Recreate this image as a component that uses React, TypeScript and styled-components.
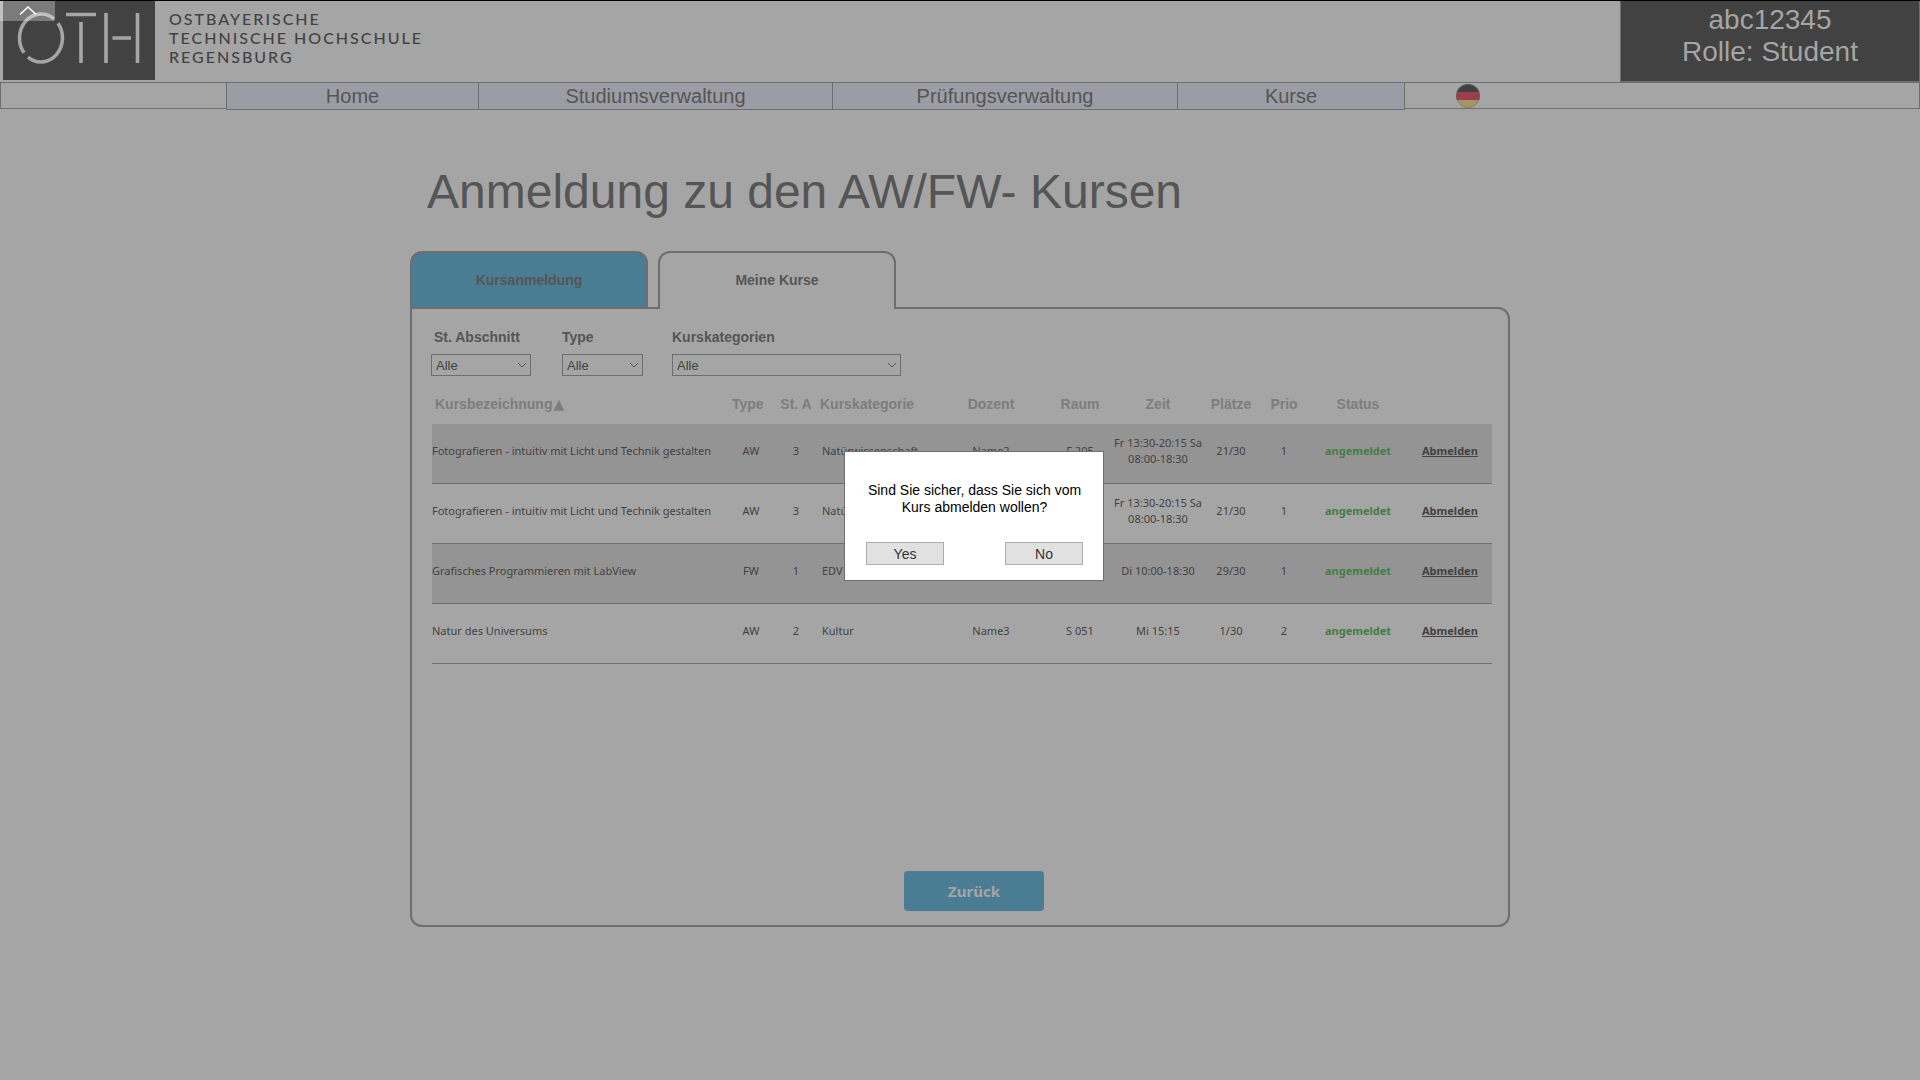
import React, { useState } from 'react';
import styled, { createGlobalStyle, css } from 'styled-components';

const line = '#6e6e6e';
const page = '#a5a5a5';
const ink = '#555555';
const petrol = '#4a7d93';
const sans = `"Liberation Sans", Arial, sans-serif`;
const humanist = `"Noto Sans", "Open Sans", sans-serif`;

const GlobalStyle = createGlobalStyle`
  *, *::before, *::after { box-sizing: border-box; }
  body { margin: 0; background: ${page}; color: ${ink}; font-family: ${sans}; }
  button, select { font-family: inherit; }
`;

const Header = styled.header`
  display: flex;
  justify-content: space-between;
  height: 82px;
  border-top: 1px solid #000;
`;

const Brand = styled.a`
  display: flex;
  align-items: flex-start;
  gap: 14px;
  padding-left: 3px;
  color: #424242;
  text-decoration: none;
`;

const BrandName = styled.span`
  padding-top: 8px;
  font: 500 16px/19px Lato, sans-serif;
  letter-spacing: 2px;
`;

const CollapseButton = styled.button`
  position: absolute;
  top: 1px;
  left: 0;
  width: 55px;
  height: 20px;
  padding: 0;
  border: 0;
  background: rgba(255, 255, 255, 0.3);
`;

const UserBox = styled.div`
  width: 300px;
  padding-top: 3px;
  border: solid ${line};
  border-width: 0 1px 1px;
  background: #424242;
  color: ${page};
  font-size: 28px;
  line-height: 32px;
  text-align: center;
`;

const Nav = styled.nav`
  display: grid;
  grid-template-columns: 226px 252px 354px 345px 228px 1fr;
  height: 28px;
`;

const NavBlank = styled.div`
  display: flex;
  align-items: center;
  height: 27px;
  padding-left: 51px;
  border: 1px solid ${line};
  border-width: 1px 0 1px 1px;
  &:last-child { border-width: 1px 1px 1px 0; }
`;

const NavLink = styled.a`
  border: 1px solid ${line};
  border-right-width: 0;
  background: #9c9ca5;
  color: ${ink};
  font-size: 20px;
  line-height: 26px;
  text-align: center;
  text-decoration: none;
  &:nth-last-child(2) { border-right-width: 1px; }
`;

const LanguageButton = styled.button`
  display: block;
  width: 24px;
  height: 24px;
  padding: 0;
  border: 0;
  background: none;
`;

const Main = styled.main`
  width: 100%;
  max-width: 1100px;
  margin: 0 auto;
  padding: 53px 0 40px;
`;

const Title = styled.h1`
  margin: 0 0 30px;
  padding-left: 17px;
  font-size: 48px;
  font-weight: 400;
  line-height: 58px;
`;

const Tabs = styled.div`
  display: flex;
  gap: 10px;
  margin-bottom: -2px;
`;

const Tab = styled.button<{ $active?: boolean }>`
  position: relative;
  width: 238px;
  height: 58px;
  padding: 0;
  border: 2px solid ${line};
  border-radius: 12px 12px 0 0;
  background: ${petrol};
  color: ${ink};
  font-size: 14px;
  font-weight: 700;
  ${p => p.$active && css`
    padding-bottom: 2px;
    border-bottom: 0;
    background: ${page};
  `}
`;

const Panel = styled.section`
  display: flex;
  flex-direction: column;
  min-height: 620px;
  padding: 19px 16px 14px 20px;
  border: 2px solid ${line};
  border-radius: 0 12px 12px 12px;
`;

const Filters = styled.div`
  display: flex;
`;

const Filter = styled.div<{ $width: number; $gap: number }>`
  display: flex;
  flex-direction: column;
  gap: 8px;
  width: ${p => p.$width}px;
  margin-right: ${p => p.$gap}px;
  margin-left: -1px;
`;

const FilterLabel = styled.label<{ $indent?: boolean }>`
  padding-left: ${p => (p.$indent ? 3 : 0)}px;
  font-size: 14px;
  font-weight: 700;
  line-height: 18px;
  white-space: nowrap;
`;

const SelectFrame = styled.span`
  display: grid;
  align-items: center;
  > * { grid-area: 1 / 1; }
  svg { justify-self: end; margin-right: 4px; pointer-events: none; }
`;

const Select = styled.select`
  appearance: none;
  width: 100%;
  height: 22px;
  padding: 0 4px;
  border: 1px solid ${line};
  border-radius: 0;
  background: transparent;
  color: #424242;
  font-size: 13px;
`;

const Table = styled.table`
  width: 100%;
  margin-top: 12px;
  border-collapse: separate;
  border-spacing: 0;
  table-layout: fixed;
`;

const Th = styled.th<{ $left?: number }>`
  height: 36px;
  padding: 0 0 4px;
  color: #7d7d7d;
  font-size: 14px;
  line-height: 16px;
  white-space: nowrap;
  ${p => p.$left !== undefined && css`
    padding-left: ${p.$left}px;
    text-align: left;
  `}
`;

const SortMark = styled.span`
  margin-left: 1px;
  font-family: "DejaVu Sans", sans-serif;
`;

const Row = styled.tr`
  &:nth-child(odd) { background: #949494; }
`;

const Td = styled.td<{ $left?: number }>`
  height: 60px;
  padding: 0 0 6px;
  border-bottom: 1px solid ${line};
  color: #424242;
  font: 11px/16px ${humanist};
  text-align: center;
  white-space: pre-line;
  ${p => p.$left !== undefined && css`
    padding-left: ${p.$left}px;
    text-align: left;
  `}
`;

const Status = styled.strong`
  color: #437d43;
`;

const SignOff = styled.a`
  color: #424242;
  font-weight: 700;
`;

const Footer = styled.div`
  display: flex;
  justify-content: center;
  margin-top: auto;
  padding-left: 24px;
`;

const Back = styled.button`
  width: 140px;
  height: 40px;
  padding: 0;
  border: 0;
  border-radius: 4px;
  background: ${petrol};
  color: ${page};
  font: 700 15px/20px ${humanist};
`;

const Overlay = styled.div`
  position: fixed;
  inset: 0;
  display: flex;
  align-items: flex-start;
  justify-content: center;
  padding: 451px 0 0 28px;
`;

const Dialog = styled.div`
  width: 260px;
  padding: 30px 20px 15px 21px;
  border: 1px solid ${line};
  background: #fff;
  color: #000;
  font-size: 14px;
  line-height: 17px;
  text-align: center;
`;

const Question = styled.p`
  margin: 0 0 26px;
`;

const Choices = styled.div`
  display: flex;
  justify-content: space-between;
`;

const Choice = styled.button`
  width: 78px;
  height: 23px;
  padding: 0;
  border: 1px solid #adadad;
  background: #e1e1e1;
  color: #333;
  font-size: 14px;
`;

const Logo = () => (
  <svg width="152" height="79" viewBox="0 0 152 79" role="img" aria-label="OTH">
    <rect width="152" height="79" fill="#424242" />
    <g fill="none" stroke={page} strokeWidth="3.6">
      <path d="M51 17.900A21.500 24 0 0 0 21 51.700" />
      <path d="M55 22.300A21.500 24 0 0 1 25 56.100" />
      <path d="M63 13.500h30M78 21v41M103 12v50M134.500 12v50M109.500 37h18.500" />
    </g>
  </svg>
);

const Arrow = () => (
  <svg width="10" height="6" viewBox="0 0 10 6" fill="none" stroke={ink}>
    <path d="M1 1l4 4 4-4" />
  </svg>
);

const Flag = () => (
  <svg width="24" height="24" viewBox="0 0 24 24">
    <clipPath id="disc"><circle cx="12" cy="12" r="12" /></clipPath>
    <g clipPath="url(#disc)">
      <path fill="#404040" d="M0 0h24v8H0z" />
      <path fill="#9a3d50" d="M0 8h24v8H0z" />
      <path fill="#a39660" d="M0 16h24v8H0z" />
    </g>
    <circle cx="12" cy="12" r="11.500" fill="none" stroke={line} strokeOpacity="0.5" />
  </svg>
);

const filters = [
  { id: 'abschnitt', label: 'St. Abschnitt', width: 100, gap: 32, indent: true },
  { id: 'type', label: 'Type', width: 81, gap: 30 },
  { id: 'kategorie', label: 'Kurskategorien', width: 229, gap: 0 },
];

const widths = [298, 42, 48, 110, 122, 56, 100, 46, 60, 88, 90];

const courses = [
  ['Fotografieren - intuitiv mit Licht und Technik gestalten', 'AW', '3', 'Natürwissenschaft', 'Name2', 'F 205', 'Fr 13:30-20:15 Sa\n08:00-18:30', '21/30', '1'],
  ['Fotografieren - intuitiv mit Licht und Technik gestalten', 'AW', '3', 'Natürwissenschaft', '', '', 'Fr 13:30-20:15 Sa\n08:00-18:30', '21/30', '1'],
  ['Grafisches Programmieren mit LabView', 'FW', '1', 'EDV', '', '', 'Di 10:00-18:30', '29/30', '1'],
  ['Natur des Universums', 'AW', '2', 'Kultur', 'Name3', 'S 051', 'Mi 15:15', '1/30', '2'],
];

const cellLeft: Record<number, number> = { 0: 0, 3: 2 };

export default function App() {
  const [open, setOpen] = useState(true);
  return (
    <>
      <GlobalStyle />
      <Header>
        <Brand href="#">
          <Logo />
          <BrandName>
            OSTBAYERISCHE<br />TECHNISCHE HOCHSCHULE<br />REGENSBURG
          </BrandName>
        </Brand>
        <CollapseButton aria-label="Einklappen">
          <svg width="55" height="20" viewBox="0 0 55 20" fill="none" stroke="#fff" strokeWidth="1.600">
            <path d="M20 13.500l8-7.500 8 7.500" />
          </svg>
        </CollapseButton>
        <UserBox>abc12345<br />Rolle: Student</UserBox>
      </Header>
      <Nav>
        <NavBlank />
        <NavLink href="#home">Home</NavLink>
        <NavLink href="#studium">Studiumsverwaltung</NavLink>
        <NavLink href="#pruefung">Prüfungsverwaltung</NavLink>
        <NavLink href="#kurse">Kurse</NavLink>
        <NavBlank>
          <LanguageButton aria-label="Deutsch"><Flag /></LanguageButton>
        </NavBlank>
      </Nav>
      <Main>
        <Title>Anmeldung zu den AW/FW- Kursen</Title>
        <Tabs>
          <Tab>Kursanmeldung</Tab>
          <Tab $active>Meine Kurse</Tab>
        </Tabs>
        <Panel>
          <Filters>
            {filters.map(f => (
              <Filter key={f.id} $width={f.width} $gap={f.gap}>
                <FilterLabel htmlFor={f.id} $indent={f.indent}>{f.label}</FilterLabel>
                <SelectFrame>
                  <Select id={f.id}><option>Alle</option></Select>
                  <Arrow />
                </SelectFrame>
              </Filter>
            ))}
          </Filters>
          <Table>
            <colgroup>
              {widths.map((w, i) => <col key={i} width={w} />)}
            </colgroup>
            <thead>
              <tr>
                <Th $left={3}>Kursbezeichnung<SortMark>▲</SortMark></Th>
                <Th $left={2}>Type</Th>
                <Th>St. A</Th>
                <Th $left={0}>Kurskategorie</Th>
                <Th>Dozent</Th>
                <Th>Raum</Th>
                <Th>Zeit</Th>
                <Th>Plätze</Th>
                <Th>Prio</Th>
                <Th>Status</Th>
                <Th />
              </tr>
            </thead>
            <tbody>
              {courses.map((course, r) => (
                <Row key={r}>
                  {course.map((value, c) => (
                    <Td key={c} $left={cellLeft[c]}>{value}</Td>
                  ))}
                  <Td><Status>angemeldet</Status></Td>
                  <Td $left={20}>
                    <SignOff href="#abmelden" onClick={() => setOpen(true)}>Abmelden</SignOff>
                  </Td>
                </Row>
              ))}
            </tbody>
          </Table>
          <Footer><Back>Zurück</Back></Footer>
        </Panel>
      </Main>
      {open && (
        <Overlay>
          <Dialog role="dialog" aria-modal="true">
            <Question>Sind Sie sicher, dass Sie sich vom Kurs abmelden wollen?</Question>
            <Choices>
              <Choice onClick={() => setOpen(false)}>Yes</Choice>
              <Choice onClick={() => setOpen(false)}>No</Choice>
            </Choices>
          </Dialog>
        </Overlay>
      )}
    </>
  );
}
